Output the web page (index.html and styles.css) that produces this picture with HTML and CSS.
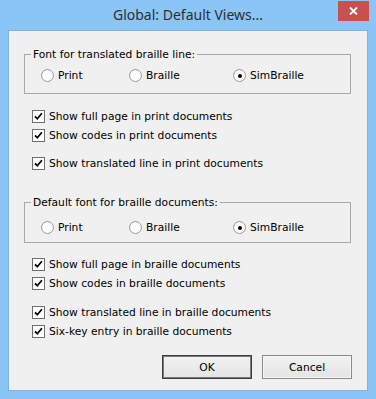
FILE: index.html
```html
<!DOCTYPE html>
<html lang="en">
<head>
    <meta charset="UTF-8">
    <title>Global: Default Views...</title>
    <link rel="stylesheet" href="styles.css">
</head>
<body>
    <div class="window">
        <div class="titlebar">
            <span class="title">Global: Default Views...</span>
            <button class="close" aria-label="Close">
                <svg width="9" height="8" viewBox="0 0 9 8"><path d="M1 0.5l7 7M8 0.5l-7 7" stroke="#fff" stroke-width="1.8" fill="none"/></svg>
            </button>
        </div>

        <div class="client">
            <fieldset class="group group-first">
                <legend>Font for translated braille line:</legend>
                <div class="radios">
                    <label class="radio"><span class="dot"></span>Print</label>
                    <label class="radio"><span class="dot"></span>Braille</label>
                    <label class="radio"><span class="dot checked"></span>SimBraille</label>
                </div>
            </fieldset>

            <div class="checks checks-first">
                <label class="check"><svg class="box" width="13" height="13" viewBox="0 0 13 13"><rect x="0.5" y="0.5" width="12" height="12" fill="#fff" stroke="#707070"/><path d="M3 6.3l2.3 2.4 4.6-5.4" fill="none" stroke="#000" stroke-width="1.7"/></svg>Show full page in print documents</label>
                <label class="check"><svg class="box" width="13" height="13" viewBox="0 0 13 13"><rect x="0.5" y="0.5" width="12" height="12" fill="#fff" stroke="#707070"/><path d="M3 6.3l2.3 2.4 4.6-5.4" fill="none" stroke="#000" stroke-width="1.7"/></svg>Show codes in print documents</label>
                <label class="check spaced"><svg class="box" width="13" height="13" viewBox="0 0 13 13"><rect x="0.5" y="0.5" width="12" height="12" fill="#fff" stroke="#707070"/><path d="M3 6.3l2.3 2.4 4.6-5.4" fill="none" stroke="#000" stroke-width="1.7"/></svg>Show translated line in print documents</label>
            </div>

            <fieldset class="group group-second">
                <legend>Default font for braille documents:</legend>
                <div class="radios">
                    <label class="radio"><span class="dot"></span>Print</label>
                    <label class="radio"><span class="dot"></span>Braille</label>
                    <label class="radio"><span class="dot checked"></span>SimBraille</label>
                </div>
            </fieldset>

            <div class="checks checks-second">
                <label class="check"><svg class="box" width="13" height="13" viewBox="0 0 13 13"><rect x="0.5" y="0.5" width="12" height="12" fill="#fff" stroke="#707070"/><path d="M3 6.3l2.3 2.4 4.6-5.4" fill="none" stroke="#000" stroke-width="1.7"/></svg>Show full page in braille documents</label>
                <label class="check"><svg class="box" width="13" height="13" viewBox="0 0 13 13"><rect x="0.5" y="0.5" width="12" height="12" fill="#fff" stroke="#707070"/><path d="M3 6.3l2.3 2.4 4.6-5.4" fill="none" stroke="#000" stroke-width="1.7"/></svg>Show codes in braille documents</label>
                <label class="check wide-gap"><svg class="box" width="13" height="13" viewBox="0 0 13 13"><rect x="0.5" y="0.5" width="12" height="12" fill="#fff" stroke="#707070"/><path d="M3 6.3l2.3 2.4 4.6-5.4" fill="none" stroke="#000" stroke-width="1.7"/></svg>Show translated line in braille documents</label>
                <label class="check"><svg class="box" width="13" height="13" viewBox="0 0 13 13"><rect x="0.5" y="0.5" width="12" height="12" fill="#fff" stroke="#707070"/><path d="M3 6.3l2.3 2.4 4.6-5.4" fill="none" stroke="#000" stroke-width="1.7"/></svg>Six-key entry in braille documents</label>
            </div>

            <div class="buttons">
                <button class="btn btn-default">OK</button>
                <button class="btn">Cancel</button>
            </div>
        </div>
    </div>
</body>
</html>
```

FILE: styles.css
```css
* {
    box-sizing: border-box;
}

body {
    margin: 0;
    font-family: "DejaVu Sans", sans-serif;
    font-size: 10.7px;
    color: #000;
}

.window {
    position: relative;
    width: 376px;
    height: 399px;
    padding: 0 8px;
    background: #8bc5f6;
}

.titlebar {
    height: 30px;
    line-height: 30px;
    text-align: center;
    font-family: "Noto Sans", sans-serif;
    font-size: 14px;
    color: #2e2e2e;
}

.close {
    position: absolute;
    top: 1px;
    left: 338px;
    width: 31px;
    height: 20px;
    padding: 0;
    border: none;
    background: #c75050;
    display: flex;
    align-items: center;
    justify-content: center;
}

.client {
    height: 361px;
    padding: 17px 15px 0 15px;
    background: #f0f0f0;
    border: 1px solid #7eb3e6;
}

.group {
    width: 327px;
    margin: 0;
    border: 1px solid #a8a8a8;
    min-inline-size: 0;
}

.group-first {
    padding: 8px 0 11px 6px;
}

.group-second {
    margin-top: 23px;
    padding: 12px 0 8px 6px;
}

legend {
    padding: 0 2px;
    line-height: 13px;
}

.radios {
    display: flex;
    height: 13px;
    padding-left: 10px;
    align-items: center;
}

.radio {
    display: flex;
    align-items: center;
    gap: 4px;
    line-height: 13px;
}

.radio:nth-child(1) {
    width: 88px;
}

.radio:nth-child(2) {
    width: 104px;
}

.dot {
    position: relative;
    width: 13px;
    height: 13px;
    border-radius: 50%;
    border: 1px solid #9a9a9a;
    background: radial-gradient(circle at 60% 65%, #fff 55%, #e2e2e2 100%);
}

.dot.checked::after {
    content: "";
    position: absolute;
    top: 3.5px;
    left: 3.5px;
    width: 4px;
    height: 4px;
    border-radius: 50%;
    background: #000;
}

.checks {
    margin-left: 8px;
}

.checks-first {
    margin-top: 13px;
}

.checks-second {
    margin-top: 12px;
}

.check {
    display: flex;
    align-items: center;
    gap: 4px;
    height: 19px;
}

.check.spaced {
    margin-top: 9px;
}

.check.wide-gap {
    margin-top: 10px;
}

.box {
    flex: none;
}

.buttons {
    display: flex;
    justify-content: flex-end;
    gap: 10px;
    margin-top: 14px;
}

.btn {
    width: 90px;
    height: 24px;
    padding: 0;
    font-family: inherit;
    font-size: 10.7px;
    color: #000;
    border: 1px solid #8a8a8a;
    background: linear-gradient(#f2f2f2, #e4e4e4);
    box-shadow: inset 0 0 0 1px #f6f6f6;
}

.btn-default {
    border-color: #3d3d3d;
    box-shadow: inset 0 0 0 1px #7a7a7a;
}
```
